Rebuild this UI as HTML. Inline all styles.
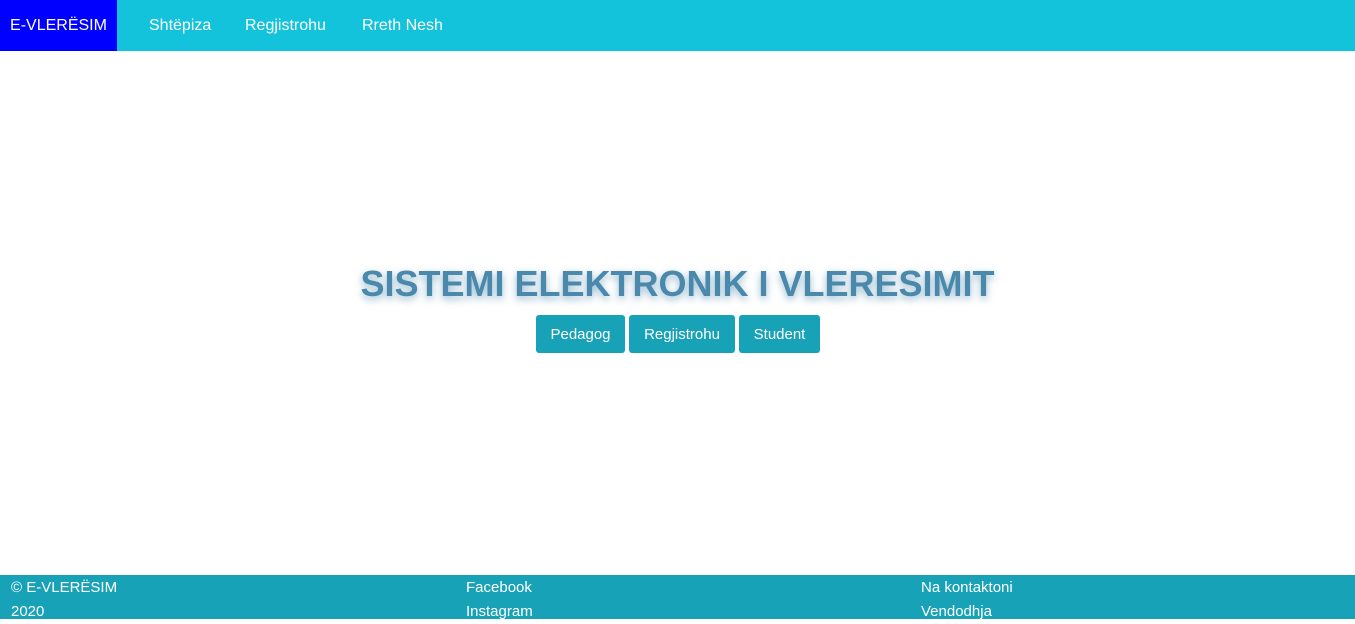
<!DOCTYPE html>
<html><head><meta charset="utf-8"><style>
body{margin:0;width:1355px;height:619px;overflow:hidden;font-family:"Liberation Sans",sans-serif;background:#fff;position:relative}
.nav{position:absolute;top:0;left:0;width:1355px;height:51px;background:#12c3db}
.brand{position:absolute;left:0;top:0;width:117px;height:51px;background:#0000ff;color:#fff;font-size:16px;line-height:51px;text-align:center}
.nav a{position:absolute;top:0;line-height:51px;color:#fff;font-size:16px;text-decoration:none}
h1{position:absolute;top:263px;left:0;width:1355px;margin:0;text-align:center;font-size:36px;font-weight:bold;color:#4a88ac;text-shadow:0 3px 8px rgba(74,136,172,.6)}
.btn{position:absolute;top:315px;height:38px;background:#17a2b8;color:#fff;border-radius:3px;font-size:15px;line-height:40px;text-align:center}
.foot{position:absolute;top:575px;left:0;width:1355px;height:44px;background:#17a2b8;color:#fff;font-size:15px}
.foot div{position:absolute;top:1px;line-height:24px}
</style></head><body>
<div class="nav"><div class="brand">E-VLERËSIM</div>
<a style="left:149px">Shtëpiza</a><a style="left:245px">Regjistrohu</a><a style="left:362px">Rreth Nesh</a></div>
<h1>SISTEMI ELEKTRONIK I VLERESIMIT</h1>
<div class="btn" style="left:536px;width:89px">Pedagog</div>
<div class="btn" style="left:629px;width:106px">Regjistrohu</div>
<div class="btn" style="left:739px;width:81px">Student</div>
<div class="foot"><div style="left:11px">© E-VLERËSIM<br>2020</div><div style="left:466px">Facebook<br>Instagram</div><div style="left:921px">Na kontaktoni<br>Vendodhja</div></div>
</body></html>
